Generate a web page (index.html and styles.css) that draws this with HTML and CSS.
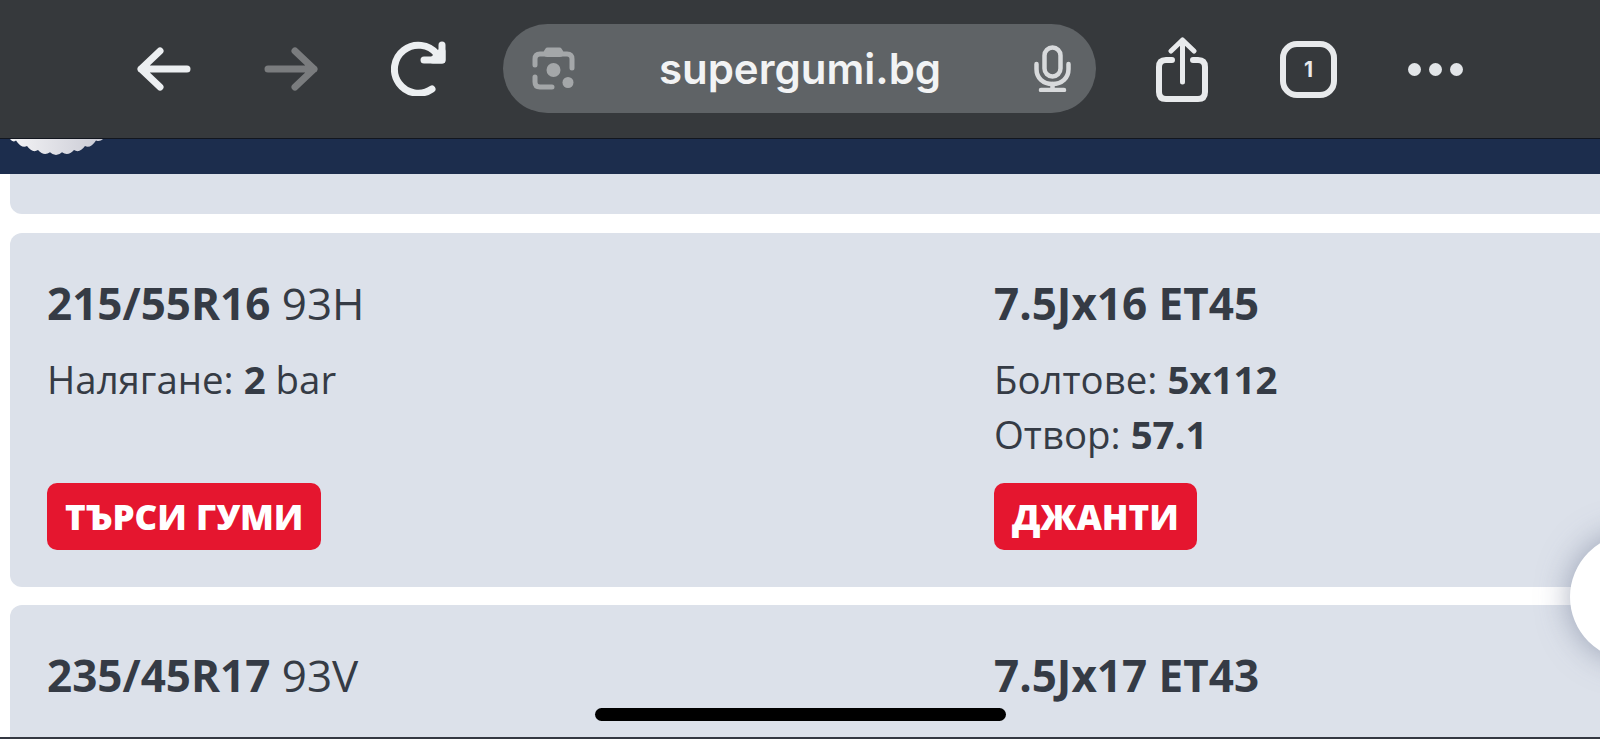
FILE: index.html
```html
<!DOCTYPE html>
<html lang="bg">
<head>
<meta charset="utf-8">
<title>supergumi.bg</title>
<link rel="stylesheet" href="styles.css">
</head>
<body>
<header class="toolbar">
  <svg class="ico-arrow" viewBox="0 0 54 44" fill="none" stroke="#eceff1" stroke-width="7" stroke-linecap="round" stroke-linejoin="round"><path d="M4 22H50M23 4 4 22 23 40"/></svg>
  <svg class="ico-arrow" viewBox="0 0 54 44" fill="none" stroke="#7a7c7e" stroke-width="7" stroke-linecap="round" stroke-linejoin="round"><path d="M50 22H4M31 4 50 22 31 40"/></svg>
  <svg class="ico-reload" viewBox="0 0 55 55" fill="none" stroke="#eceff1" stroke-width="7" stroke-linecap="round" stroke-linejoin="round"><path d="M46 13A24 24 0 1 0 41 48"/><path d="M51 4V19H33"/><path d="M51 10V19H42Z" fill="#eceff1"/></svg>
  <div class="pill">
    <svg class="ico-lens" viewBox="0 0 43 43" fill="none" stroke="#a4a7a9" stroke-width="5" stroke-linecap="round" stroke-linejoin="round"><path d="M3 18V12Q3 7 8 7H13L15.500 3H27.500L30 7H35Q40 7 40 12V21"/><path d="M15 7H28" stroke-width="6"/><path d="M3 30V35Q3 40 8 40H20"/><circle cx="21.500" cy="23" r="7" fill="#a4a7a9" stroke="none"/><circle cx="36" cy="35.500" r="5.500" fill="#a4a7a9" stroke="none"/></svg>
    <span class="url">supergumi.bg</span>
    <svg class="ico-mic" viewBox="0 0 37 47" fill="none" stroke="#d8dadc" stroke-width="4.500" stroke-linecap="round" stroke-linejoin="round"><rect x="10.500" y="2.500" width="16" height="29" rx="8"/><path d="M2.500 19V24C2.500 33 9 39 18.500 39S34.500 33 34.500 24V19"/><path d="M18.500 39V44M7 45H30"/></svg>
  </div>
  <svg class="ico-share" viewBox="0 0 52 65" fill="none" stroke="#e8eaec" stroke-linecap="round" stroke-linejoin="round"><path stroke-width="6" d="M16 23H10Q3 23 3 30V55Q3 62 10 62H42Q49 62 49 55V30Q49 23 42 23H37"/><path stroke-width="5" d="M26.500 45V3M15 14 26.500 3 38 14"/></svg>
  <div class="tabs">1</div>
  <div class="dots"><i class="dot"></i><i class="dot"></i><i class="dot"></i></div>
</header>
<div class="site-head">
  <svg class="gear" viewBox="0 0 93 17"><defs><linearGradient id="g" x1="0" x2="1"><stop offset="0" stop-color="#f4f4f6"/><stop offset="1" stop-color="#c9cad4"/></linearGradient></defs><path fill="url(#g)" d="M0 0Q3 4 6 1.400 11.500 9.750 17 7.100 22.500 14.550 28 11 34 17.700 40 13.200 46 18.800 52 13.200 58 17.700 64 11 69.500 14.550 75 7.100 80.500 9.750 86 1.400 90 3 93 0Z"/></svg>
</div>
<main class="list">
  <div class="card card-stub"></div>
  <section class="card">
    <div class="col">
      <h2 class="size"><b>215/55R16</b> 93H</h2>
      <div class="rows"><p class="row">Налягане: <b>2</b> bar</p></div>
      <a class="btn">ТЪРСИ ГУМИ</a>
    </div>
    <div class="col">
      <h2 class="size"><b>7.5Jx16 ET45</b></h2>
      <div class="rows">
        <p class="row">Болтове: <b>5x112</b></p>
        <p class="row">Отвор: <b>57.1</b></p>
      </div>
      <a class="btn">ДЖАНТИ</a>
    </div>
  </section>
  <section class="card">
    <div class="col">
      <h2 class="size"><b>235/45R17</b> 93V</h2>
    </div>
    <div class="col">
      <h2 class="size"><b>7.5Jx17 ET43</b></h2>
    </div>
  </section>
</main>
<div class="fab"></div>
<div class="home-bar"></div>
<div class="edge"></div>
</body>
</html>
```
FILE: styles.css
```css
html, body { margin: 0; padding: 0; }
body {
  position: relative;
  width: 1600px;
  height: 739px;
  overflow: hidden;
  background: #fff;
  font-family: "Open Sans", "Noto Sans", sans-serif;
  color: #353b45;
}
.toolbar {
  position: relative;
  z-index: 2;
  box-sizing: border-box;
  height: 139px;
  padding-left: 137px;
  display: grid;
  grid-template-columns: 127px 127px 112px 653px 124px 128px 55px;
  align-items: center;
  justify-items: start;
  background: #36393c;
  border-bottom: 1px solid #12161f;
}
.ico-arrow { width: 54px; height: 44px; margin-top: -1px; }
.ico-reload { width: 55px; height: 55px; margin-top: -1px; }
.pill {
  box-sizing: border-box;
  width: 593px;
  height: 89px;
  margin-top: -1px;
  padding: 0 25px 0 29px;
  border-radius: 45px;
  background: #5f6366;
  display: flex;
  align-items: center;
  justify-content: space-between;
}
.ico-lens { width: 43px; height: 43px; }
.ico-mic { width: 37px; height: 47px; }
.ico-share { width: 52px; height: 65px; margin-top: 1px; }
.url {
  padding-right: 9px;
  font-family: Inter, "Liberation Sans", sans-serif;
  font-weight: 600;
  font-size: 42px;
  color: #f2f3f4;
}
.tabs {
  box-sizing: border-box;
  width: 57px;
  height: 57px;
  border: 6px solid #e8eaec;
  border-radius: 17px;
  display: flex;
  align-items: center;
  justify-content: center;
  font-family: Inter, "Liberation Sans", sans-serif;
  font-weight: 700;
  font-size: 21px;
  color: #e8eaec;
}
.dots { display: flex; gap: 8px; width: 55px; }
.dot { width: 13px; height: 13px; border-radius: 50%; background: #e2e5e8; }
.site-head { height: 35px; background: #1c2d4d; padding-left: 10px; }
.gear { display: block; width: 93px; height: 17px; }
.list { display: flex; flex-direction: column; gap: 18px; padding-left: 10px; }
.card {
  box-sizing: border-box;
  width: 1620px;
  height: 354px;
  flex: none;
  padding: 37px;
  border-radius: 12px;
  background: #dce1ea;
  display: grid;
  grid-template-columns: 947px 947px;
}
.card-stub { height: 40px; margin-bottom: 1px; padding: 0; border-radius: 0 0 12px 12px; }
.col { display: flex; flex-direction: column; align-items: flex-start; height: 280px; }
.size { margin: 0; font-size: 44px; line-height: 66px; font-weight: 400; }
.size b, .row b { font-weight: 700; }
.rows { margin-top: 16px; flex: 1; }
.row { margin: 0; font-size: 38.4px; line-height: 55px; }
.btn {
  box-sizing: border-box;
  height: 67px;
  padding: 0 18px;
  border-radius: 10px;
  background: #e5162f;
  color: #fff;
  font-weight: 800;
  font-size: 35px;
  line-height: 67px;
}
.fab {
  position: absolute;
  left: 1570px;
  top: 534px;
  width: 126px;
  height: 126px;
  border-radius: 50%;
  background: #fff;
  box-shadow: 0 0 32px rgba(95, 105, 135, 0.55);
}
.home-bar {
  position: absolute;
  left: 595px;
  top: 708px;
  width: 411px;
  height: 13px;
  border-radius: 7px;
  background: #000;
}
.edge {
  position: absolute;
  left: 0;
  right: 0;
  bottom: 0;
  height: 2px;
  background: #343842;
}
```
